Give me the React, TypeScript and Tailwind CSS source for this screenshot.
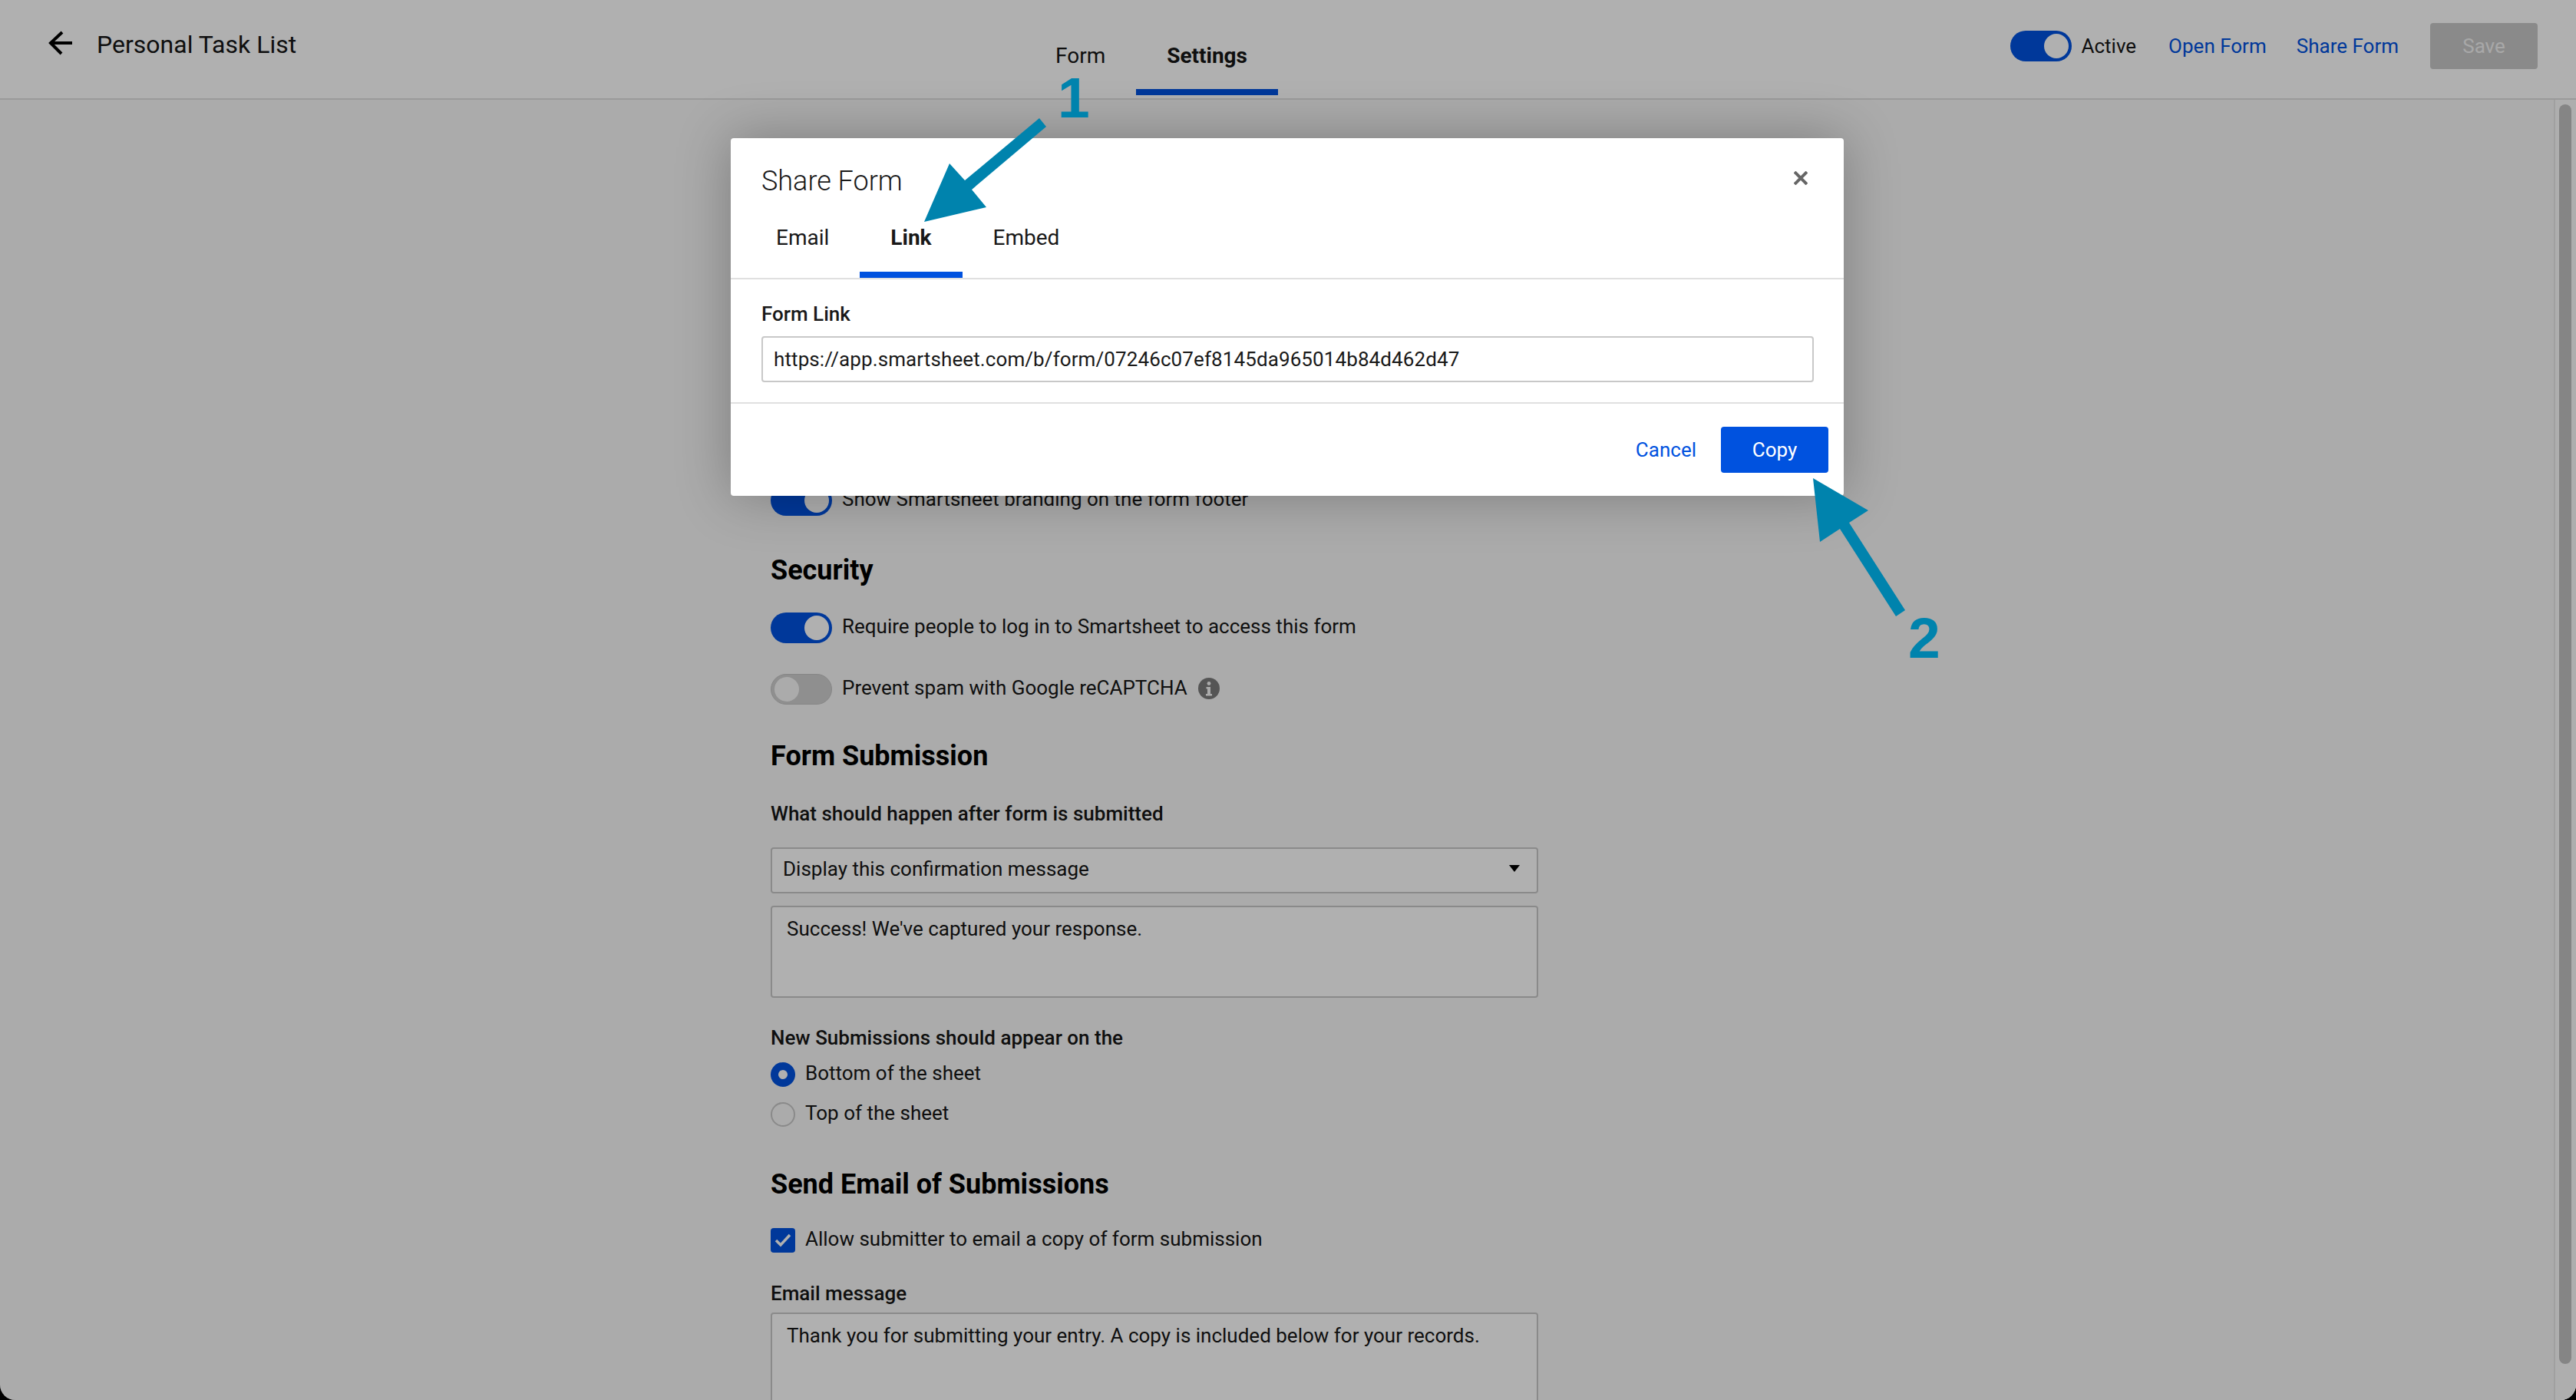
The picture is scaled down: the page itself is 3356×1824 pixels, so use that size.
import React from 'react';

const Toggle = ({ on }: { on: boolean }) => (
  <div
    className={
      on
        ? 'w-20 h-10 rounded-full bg-[#0052df] flex items-center justify-end px-1 shrink-0'
        : 'w-20 h-10 rounded-full bg-[#cfcfcf] border border-[#c4c4c4] flex items-center justify-start px-1 shrink-0'
    }
  >
    <div className={on ? 'w-8 h-8 rounded-full bg-white' : 'w-8 h-8 rounded-full bg-[#f8f8f8]'} />
  </div>
);

const SectionHeading = ({ children, className }: { children: React.ReactNode; className: string }) => (
  <h2 className={`text-[36px] leading-[44px] font-bold text-black ${className}`}>{children}</h2>
);

const FieldLabel = ({ children, className }: { children: React.ReactNode; className: string }) => (
  <div className={`text-[26px] leading-8 font-medium text-[#161616] ${className}`}>{children}</div>
);

const Header = () => (
  <header className="h-[130px] shrink-0 bg-white border-b-2 border-[#dfdfdf] flex items-start">
    <div className="w-[1335px] h-full flex items-start pl-[63px] pt-10">
      <svg width="32" height="32" viewBox="0 0 32 32" fill="none" stroke="#000" strokeWidth="4" className="shrink-0">
        <path d="M31 16H3" />
        <path d="M18 2 3 16l14 14" />
      </svg>
      <span className="ml-[31px] text-[32px] leading-9 text-[#161616]">Personal Task List</span>
    </div>
    <div className="flex h-[124px] text-[28px]">
      <div className="px-10 pt-[52px] text-[#161616]">Form</div>
      <div className="px-10 pt-[52px] font-bold text-[#161616] border-b-8 border-[#0052df]">Settings</div>
    </div>
    <div className="ml-auto flex items-center h-[120px] pr-[50px] text-[26px]">
      <Toggle on />
      <span className="ml-3 text-[#161616]">Active</span>
      <span className="ml-[42px] text-[#0052df]">Open Form</span>
      <span className="ml-[39px] text-[#0052df]">Share Form</span>
      <div className="ml-[41px] w-[140px] h-[60px] rounded-[4px] bg-[#c8c8c8] text-[#f3f3f3] flex items-center justify-center">
        Save
      </div>
    </div>
  </header>
);

const Settings = () => (
  <main className="flex-1 min-h-0 flex bg-[#f8f8f8]">
    <div className="flex-1 overflow-hidden pl-[1004px] pt-[502px]">
      <div className="w-[1000px] text-[26px] text-[#161616]">
        <div className="flex items-center gap-[13px] h-10">
          <Toggle on />
          <span className="mb-1">Show Smartsheet branding on the form footer</span>
        </div>

        <SectionHeading className="mt-[49px]">Security</SectionHeading>
        <div className="flex items-center gap-[13px] h-10 mt-[33px]">
          <Toggle on />
          <span className="mb-1">Require people to log in to Smartsheet to access this form</span>
        </div>
        <div className="flex items-center gap-[13px] h-10 mt-10">
          <Toggle on={false} />
          <span className="mb-1">Prevent spam with Google reCAPTCHA</span>
          <svg width="28" height="28" viewBox="0 0 28 28" className="shrink-0 ml-px mb-0.5">
            <circle cx="14" cy="14" r="14" fill="#7c7c7c" />
            <circle cx="14" cy="7.5" r="2.4" fill="#f8f8f8" />
            <path d="M10.5 12h5.5v9h2v2.5h-8V21h2v-6.5h-1.500z" fill="#f8f8f8" />
          </svg>
        </div>

        <SectionHeading className="mt-[45px]">Form Submission</SectionHeading>
        <FieldLabel className="mt-[37px]">What should happen after form is submitted</FieldLabel>
        <div className="mt-7 h-[60px] bg-white border-2 border-[#c8c8c8] rounded-[4px] flex items-center justify-between pl-3.5 pr-[22px]">
          <span className="mb-1">Display this confirmation message</span>
          <svg width="14" height="9" viewBox="0 0 14 9" className="mb-1.5">
            <path d="M0 0h14L7 9z" fill="#000" />
          </svg>
        </div>
        <div className="mt-4 h-[120px] bg-white border-2 border-[#c8c8c8] rounded-[4px] pl-[19px] pt-[9px]">
          Success! We've captured your response.
        </div>

        <FieldLabel className="mt-9">New Submissions should appear on the</FieldLabel>
        <div className="flex items-center gap-[13px] h-8 mt-4">
          <div className="w-8 h-8 rounded-full bg-[#0052df] flex items-center justify-center">
            <div className="w-3 h-3 rounded-full bg-white" />
          </div>
          <span className="mb-1">Bottom of the sheet</span>
        </div>
        <div className="flex items-center gap-[13px] h-8 mt-5">
          <div className="w-8 h-8 rounded-full border-2 border-[#c8c8c8]" />
          <span className="mb-1">Top of the sheet</span>
        </div>

        <SectionHeading className="mt-[53px]">Send Email of Submissions</SectionHeading>
        <div className="flex items-center gap-[13px] h-8 mt-[35px]">
          <div className="w-8 h-8 rounded-[4px] bg-[#0052df] flex items-center justify-center">
            <svg width="22" height="18" viewBox="0 0 22 18" fill="none" stroke="#fff" strokeWidth="3.500">
              <path d="M2 9l6 6L20 2" />
            </svg>
          </div>
          <span className="mb-1">Allow submitter to email a copy of form submission</span>
        </div>
        <FieldLabel className="mt-[37px]">Email message</FieldLabel>
        <div className="mt-[9px] h-[200px] bg-white border-2 border-[#c8c8c8] rounded-[4px] pl-[19px] pt-[9px]">
          Thank you for submitting your entry. A copy is included below for your records.
        </div>
      </div>
    </div>
    <div className="w-[29px] shrink-0 bg-[#fcfcfc] border-l-2 border-[#e8e8e8] pl-[5px] pt-1.5">
      <div className="w-4 h-[1641px] rounded-full bg-[#c1c1c1]" />
    </div>
  </main>
);

const ShareModal = () => (
  <div className="absolute left-[952px] top-[180px] w-[1450px] h-[466px] bg-white rounded-[4px] shadow-[0_0_70px_rgba(0,0,0,0.28)] flex flex-col text-[26px] text-[#191919]">
    <div className="h-[184px] shrink-0 border-b-2 border-[#e0e0e0] relative">
      <div className="pl-10 pt-[34px] text-[36px] leading-[44px] font-light">Share Form</div>
      <svg width="18" height="18" viewBox="0 0 18 18" stroke="#666" strokeWidth="4" className="absolute right-[47px] top-[43px]">
        <path d="M1 1l16 16M17 1 1 17" />
      </svg>
      <div className="absolute left-[19px] bottom-0 flex h-[90px] text-[28px]">
        <div className="px-10 pt-[17px]">Email</div>
        <div className="px-10 pt-[17px] font-bold border-b-8 border-[#0052df]">Link</div>
        <div className="px-10 pt-[17px]">Embed</div>
      </div>
    </div>
    <div className="h-[162px] shrink-0 border-b-2 border-[#e0e0e0] px-10 pt-[29px]">
      <div className="leading-8 font-medium">Form Link</div>
      <div className="mt-[13px] w-[1371px] h-[60px] border-2 border-[#c8c8c8] rounded-[4px] flex items-center pl-3.5 tracking-[0.1px]">
        https://app.smartsheet.com/b/form/07246c07ef8145da965014b84d462d47
      </div>
    </div>
    <div className="flex-1 flex items-start justify-end pt-[30px] pr-5 gap-8">
      <span className="h-[60px] flex items-center text-[#0052df]">Cancel</span>
      <div className="w-[140px] h-[60px] rounded-[4px] bg-[#0052df] text-white flex items-center justify-center">Copy</div>
    </div>
  </div>
);

const Annotations = () => (
  <>
    <svg className="absolute inset-0 w-full h-full" viewBox="0 0 3356 1824" fill="#0083ad">
      <polygon points="1354,154 1363,165 1266,247 1285,270 1204,289 1237,213 1257,235" />
      <polygon points="2362,623 2434,665 2409,681 2482,795 2470,803 2397,689 2371,706" />
    </svg>
    <span className="absolute left-[1378px] top-[84px] font-['Liberation_Sans',sans-serif] font-bold text-[75px] leading-[86px] text-[#0083ad]">
      1
    </span>
    <span className="absolute left-[2486px] top-[788px] font-['Liberation_Sans',sans-serif] font-bold text-[75px] leading-[86px] text-[#0083ad]">
      2
    </span>
  </>
);

const App = () => {
  return (
    <div className="relative h-screen overflow-hidden bg-black font-['Roboto',sans-serif]">
      <div className="h-full flex flex-col rounded-b-[20px] overflow-hidden">
        <Header />
        <Settings />
      </div>
      {/* dimmed backdrop behind the dialog */}
      <div className="absolute inset-0 rounded-b-[20px] bg-black/[0.31]" />
      <ShareModal />
      <Annotations />
    </div>
  );
};

export default App;
